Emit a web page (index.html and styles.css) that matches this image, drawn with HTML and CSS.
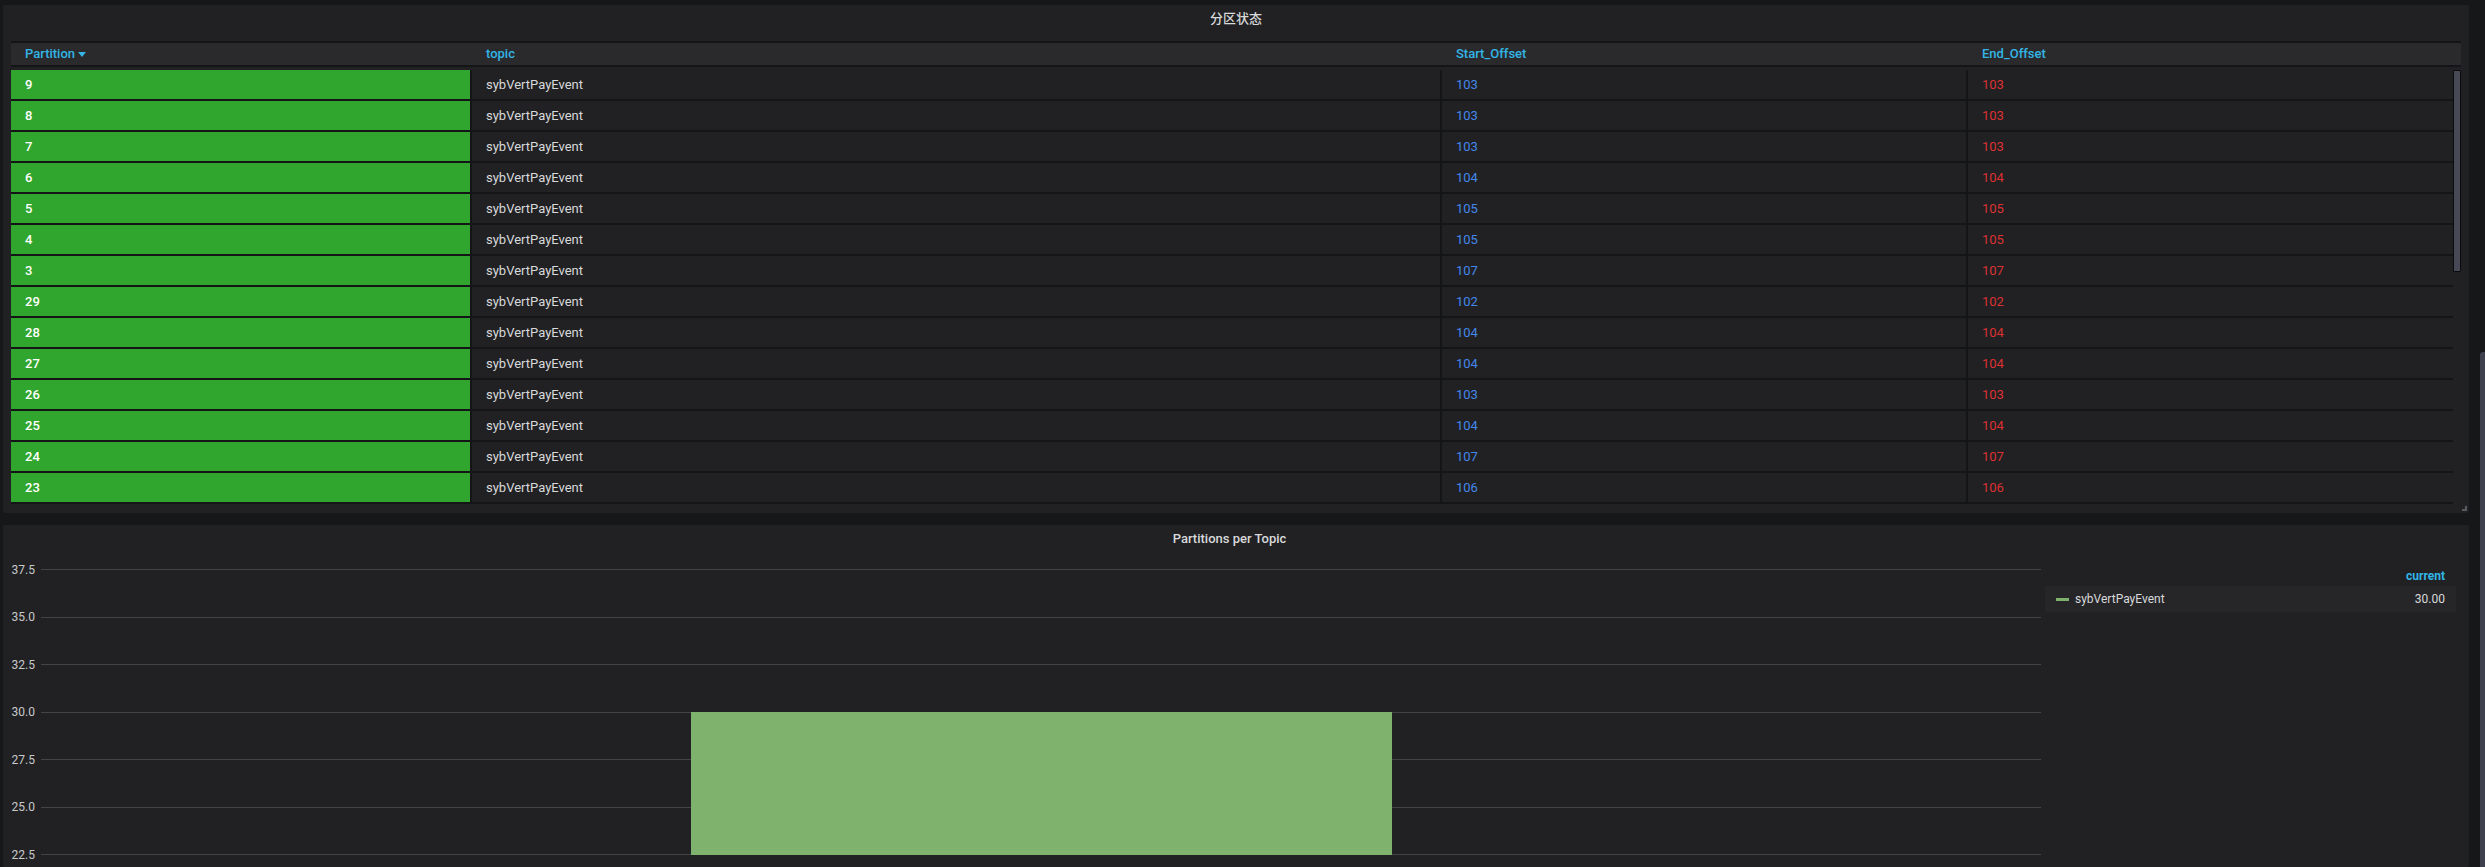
FILE: index.html
```html
<!DOCTYPE html>
<html lang="zh">
<head>
<meta charset="utf-8">
<title>Kafka</title>
<link rel="stylesheet" href="styles.css">
</head>
<body>
<div class="dashboard">
  <section class="panel panel-table">
    <div class="panel-title">分区状态</div>
    <div class="table">
      <div class="thead">
        <div class="th">Partition<svg class="caret" width="8" height="5" viewBox="0 0 8 5"><polygon points="0,0 8,0 4,5" fill="#33b5e5"/></svg></div>
        <div class="th">topic</div>
        <div class="th">Start_Offset</div>
        <div class="th">End_Offset</div>
      </div>
      <div class="tbody">
        <div class="rows">
          <div class="tr"><div class="td part">9</div><div class="td topic">sybVertPayEvent</div><div class="td start">103</div><div class="td end">103</div></div>
          <div class="tr"><div class="td part">8</div><div class="td topic">sybVertPayEvent</div><div class="td start">103</div><div class="td end">103</div></div>
          <div class="tr"><div class="td part">7</div><div class="td topic">sybVertPayEvent</div><div class="td start">103</div><div class="td end">103</div></div>
          <div class="tr"><div class="td part">6</div><div class="td topic">sybVertPayEvent</div><div class="td start">104</div><div class="td end">104</div></div>
          <div class="tr"><div class="td part">5</div><div class="td topic">sybVertPayEvent</div><div class="td start">105</div><div class="td end">105</div></div>
          <div class="tr"><div class="td part">4</div><div class="td topic">sybVertPayEvent</div><div class="td start">105</div><div class="td end">105</div></div>
          <div class="tr"><div class="td part">3</div><div class="td topic">sybVertPayEvent</div><div class="td start">107</div><div class="td end">107</div></div>
          <div class="tr"><div class="td part">29</div><div class="td topic">sybVertPayEvent</div><div class="td start">102</div><div class="td end">102</div></div>
          <div class="tr"><div class="td part">28</div><div class="td topic">sybVertPayEvent</div><div class="td start">104</div><div class="td end">104</div></div>
          <div class="tr"><div class="td part">27</div><div class="td topic">sybVertPayEvent</div><div class="td start">104</div><div class="td end">104</div></div>
          <div class="tr"><div class="td part">26</div><div class="td topic">sybVertPayEvent</div><div class="td start">103</div><div class="td end">103</div></div>
          <div class="tr"><div class="td part">25</div><div class="td topic">sybVertPayEvent</div><div class="td start">104</div><div class="td end">104</div></div>
          <div class="tr"><div class="td part">24</div><div class="td topic">sybVertPayEvent</div><div class="td start">107</div><div class="td end">107</div></div>
          <div class="tr"><div class="td part">23</div><div class="td topic">sybVertPayEvent</div><div class="td start">106</div><div class="td end">106</div></div>
        </div>
        <div class="vscroll"><div class="vthumb"></div></div>
      </div>
    </div>
    <span class="resize"></span>
  </section>

  <section class="panel panel-graph">
    <div class="panel-title">Partitions per Topic</div>
    <div class="graph">
      <div class="plot">
        <div class="tick"><span class="lbl">37.5</span><span class="line"></span></div>
        <div class="tick"><span class="lbl">35.0</span><span class="line"></span></div>
        <div class="tick"><span class="lbl">32.5</span><span class="line"></span></div>
        <div class="tick"><span class="lbl">30.0</span><span class="line"></span></div>
        <div class="tick"><span class="lbl">27.5</span><span class="line"></span></div>
        <div class="tick"><span class="lbl">25.0</span><span class="line"></span></div>
        <div class="tick"><span class="lbl">22.5</span><span class="line"></span></div>
        <div class="bar"></div>
      </div>
      <div class="legend">
        <div class="legend-head">current</div>
        <div class="legend-row"><i class="swatch"></i><span class="name">sybVertPayEvent</span><span class="val">30.00</span></div>
      </div>
    </div>
  </section>
</div>
<div class="page-scroll"></div>
</body>
</html>
```

FILE: styles.css
```css
html, body {
  margin: 0;
  height: 100%;
  overflow: hidden;
  background: #161719;
}
body {
  font-family: Roboto, "Noto Sans CJK SC", sans-serif;
  font-size: 13px;
  color: #d8d9da;
}
.dashboard {
  padding: 5px 0 0 3px;
  width: 2469px;
  height: 867px;
  box-sizing: border-box;
  overflow: hidden;
}
.panel {
  background: #212124;
  border-radius: 2px;
  position: relative;
}
.panel-title {
  text-align: center;
  font-weight: 500;
  line-height: 14px;
  color: #d8d9da;
}

/* ---------- table panel ---------- */
.panel-table {
  height: 508px;
  box-sizing: border-box;
  padding: 0 8px 9px 8px;
}
.panel-table .panel-title {
  padding: 7px 0 15px;
}
.table {
  border-top: 2px solid #141517;
}
.thead {
  display: grid;
  grid-template-columns: 461px 970px 526px 1fr;
  height: 22px;
  background: #2a2a2d;
  border-bottom: 2px solid #141517;
  margin-bottom: 3px;
}
.th {
  display: flex;
  align-items: center;
  padding-left: 14px;
  line-height: 22px;
  color: #33b5e5;
  font-weight: 500;
}
.caret {
  margin-left: 3px;
}
.tbody {
  display: flex;
}
.rows {
  width: 2442px;
}
.tr {
  display: grid;
  grid-template-columns: 461px 970px 526px 1fr;
}
.td {
  box-sizing: border-box;
  height: 31px;
  line-height: 29px;
  padding-left: 14px;
  border-bottom: 2px solid #141517;
  border-right: 2px solid #141517;
  white-space: nowrap;
}
.td.end {
  border-right: 0;
}
.td.part {
  background: #31a62e;
  color: #ffffff;
  font-weight: 500;
}
.td.topic {
  color: #d8d9da;
}
.td.start {
  color: #4487ea;
}
.td.end {
  color: #dc3131;
}
.vscroll {
  width: 8px;
}
.vthumb {
  height: 202px;
  box-sizing: border-box;
  background: #474957;
  border: 1px solid #0b0b0c;
  border-radius: 1px;
}
.resize {
  position: absolute;
  right: 2px;
  bottom: 2px;
  width: 5px;
  height: 5px;
  box-sizing: border-box;
  border-right: 2px solid #5c5c60;
  border-bottom: 2px solid #5c5c60;
}

/* ---------- graph panel ---------- */
.panel-graph {
  margin-top: 12px;
  height: 342px;
  box-sizing: border-box;
  padding-right: 13px;
  overflow: hidden;
}
.panel-graph .panel-title {
  padding-top: 7px;
}
.graph {
  display: flex;
}
.plot {
  position: relative;
  width: 2038px;
  height: 321px;
}
.tick {
  display: flex;
  align-items: center;
  height: 47.5px;
}
.lbl {
  width: 32px;
  text-align: right;
  font-size: 12px;
  color: #c8c9ca;
}
.line {
  flex: 1;
  height: 1px;
  margin-left: 6px;
  background: #444447;
}
.bar {
  position: absolute;
  left: 688px;
  top: 166.25px;
  width: 701px;
  height: 142.5px;
  background: #7eb26d;
}
.legend {
  margin-left: 4px;
  margin-top: 20px;
  width: 411px;
  font-size: 12px;
}
.legend-head {
  height: 20px;
  line-height: 20px;
  text-align: right;
  padding-right: 11px;
  color: #33b5e5;
  font-weight: 700;
}
.legend-row {
  display: flex;
  align-items: center;
  height: 26px;
  padding: 0 11px;
  background: #262629;
}
.swatch {
  display: block;
  width: 13px;
  height: 3px;
  background: #7eb26d;
}
.name {
  margin-left: 6px;
  color: #d8d9da;
}
.val {
  margin-left: auto;
  color: #d8d9da;
}
.page-scroll {
  position: fixed;
  right: 0;
  top: 352px;
  width: 5px;
  height: 515px;
  background: #3e404e;
  border-radius: 3px 0 0 0;
}
```
